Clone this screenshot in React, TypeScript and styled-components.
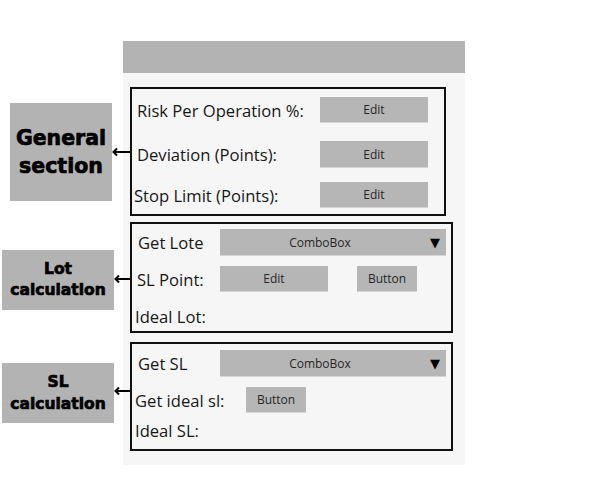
import React from 'react';
import styled, { createGlobalStyle } from 'styled-components';

const GlobalStyle = createGlobalStyle`
  html, body {
    margin: 0;
    padding: 0;
    background: #ffffff;
  }
  body {
    font-family: 'Open Sans', 'Noto Sans', sans-serif;
    color: #111111;
  }
`;

const Stage = styled.div`
  display: flex;
  padding-top: 41px;
  width: 600px;
  height: 500px;
  box-sizing: border-box;
`;

const Rail = styled.div`
  width: 123px;
  display: flex;
  flex-direction: column;
`;

const SectionTag = styled.div<{ top: number; left: number; w: number; h: number; size: number; lh: number }>`
  position: relative;
  margin-top: ${(p) => p.top}px;
  margin-left: ${(p) => p.left}px;
  width: ${(p) => p.w}px;
  height: ${(p) => p.h}px;
  background: #b3b3b3;
  display: flex;
  align-items: center;
  justify-content: center;
  text-align: center;
  font-family: 'DejaVu Sans', sans-serif;
  font-weight: 700;
  font-size: ${(p) => p.size}px;
  line-height: ${(p) => p.lh}px;
  -webkit-text-stroke: 0.7px #000;
  color: #000;
`;

// connector from a tag to its group box, drawn over the panel edge
const Connector = styled.svg<{ dy: number }>`
  position: absolute;
  left: 100%;
  top: calc(50% - 5px + ${(p) => p.dy}px);
  z-index: 1;
  overflow: visible;
`;

const Panel = styled.div`
  width: 342px;
  height: 424px;
  background: #f6f6f6;
`;

const PanelHeader = styled.div`
  height: 32px;
  background: #b3b3b3;
`;

const PanelBody = styled.div`
  padding: 14px 0 0 7px;
  display: flex;
  flex-direction: column;
`;

const Group = styled.div<{ w: number; h: number; top: number }>`
  margin-top: ${(p) => p.top}px;
  width: ${(p) => p.w}px;
  height: ${(p) => p.h}px;
  box-sizing: border-box;
  border: 2px solid #111;
  display: flex;
  flex-direction: column;
`;

const Row = styled.div<{ top: number; h: number }>`
  display: flex;
  align-items: center;
  margin-top: ${(p) => p.top}px;
  height: ${(p) => p.h}px;
`;

const Label = styled.div<{ w: number; indent: number }>`
  width: ${(p) => p.w}px;
  padding-left: ${(p) => p.indent}px;
  box-sizing: border-box;
  font-size: 16.6px;
  white-space: nowrap;
  color: #161616;
`;

const Field = styled.div<{ w: number; h: number; gap?: number }>`
  width: ${(p) => p.w}px;
  height: ${(p) => p.h}px;
  margin-left: ${(p) => p.gap ?? 0}px;
  background: #b6b6b6;
  border-bottom: 1px solid #d6d6d6;
  box-sizing: border-box;
  display: flex;
  align-items: center;
  justify-content: center;
  font-size: 12px;
  color: #262626;
`;

const Combo = styled(Field)`
  position: relative;
  padding-right: 26px;
`;

const Caret = styled.span`
  position: absolute;
  right: 6px;
  top: 50%;
  transform: translateY(-50%);
  font-family: 'DejaVu Sans', sans-serif;
  font-size: 13px;
  color: #000;
`;

const Arrow = ({ w, dy = 0 }: { w: number; dy?: number }) => (
  <Connector dy={dy} width={w} height={10} viewBox={`0 0 ${w} 10`}>
    <line x1={1} y1={5} x2={w} y2={5} stroke="#000" strokeWidth={2} />
    <polyline points="5,1.5 1.5,5 5,8.5" fill="none" stroke="#000" strokeWidth={2} />
  </Connector>
);

const ComboBox = ({ w }: { w: number }) => (
  <Combo w={w} h={27}>
    ComboBox
    <Caret>▼</Caret>
  </Combo>
);

const App = () => {
  return (
    <>
      <GlobalStyle />
      <Stage>
        <Rail>
          <SectionTag top={62} left={10} w={102} h={98} size={20.5} lh={28}>
            General
            <br />
            section
            <Arrow w={18} />
          </SectionTag>
          <SectionTag top={49} left={2} w={112} h={60} size={15.5} lh={21}>
            Lot
            <br />
            calculation
            <Arrow w={16} dy={-1} />
          </SectionTag>
          <SectionTag top={53} left={2} w={112} h={60} size={15.5} lh={22}>
            SL
            <br />
            calculation
            <Arrow w={16} dy={-2} />
          </SectionTag>
        </Rail>
        <Panel>
          <PanelHeader />
          <PanelBody>
            <Group w={316} h={129} top={0}>
              <Row top={8} h={26}>
                <Label w={188} indent={5}>Risk Per Operation %:</Label>
                <Field w={108} h={26}>Edit</Field>
              </Row>
              <Row top={18} h={27}>
                <Label w={188} indent={5}>Deviation (Points):</Label>
                <Field w={108} h={27}>Edit</Field>
              </Row>
              <Row top={14} h={26}>
                <Label w={188} indent={2}>Stop Limit (Points):</Label>
                <Field w={108} h={26}>Edit</Field>
              </Row>
            </Group>

            <Group w={323} h={111} top={6}>
              <Row top={5} h={27}>
                <Label w={88} indent={6}>Get Lote</Label>
                <ComboBox w={226} />
              </Row>
              <Row top={10} h={26}>
                <Label w={88} indent={5}>SL Point:</Label>
                <Field w={108} h={26}>Edit</Field>
                <Field w={60} h={26} gap={29}>Button</Field>
              </Row>
              <Row top={11} h={26}>
                <Label w={88} indent={3}>Ideal Lot:</Label>
              </Row>
            </Group>

            <Group w={323} h={109} top={9}>
              <Row top={6} h={27}>
                <Label w={88} indent={6}>Get SL</Label>
                <ComboBox w={226} />
              </Row>
              <Row top={10} h={26}>
                <Label w={114} indent={3}>Get ideal sl:</Label>
                <Field w={60} h={26}>Button</Field>
              </Row>
              <Row top={5} h={24}>
                <Label w={88} indent={3}>Ideal SL:</Label>
              </Row>
            </Group>
          </PanelBody>
        </Panel>
      </Stage>
    </>
  );
};

export default App;
